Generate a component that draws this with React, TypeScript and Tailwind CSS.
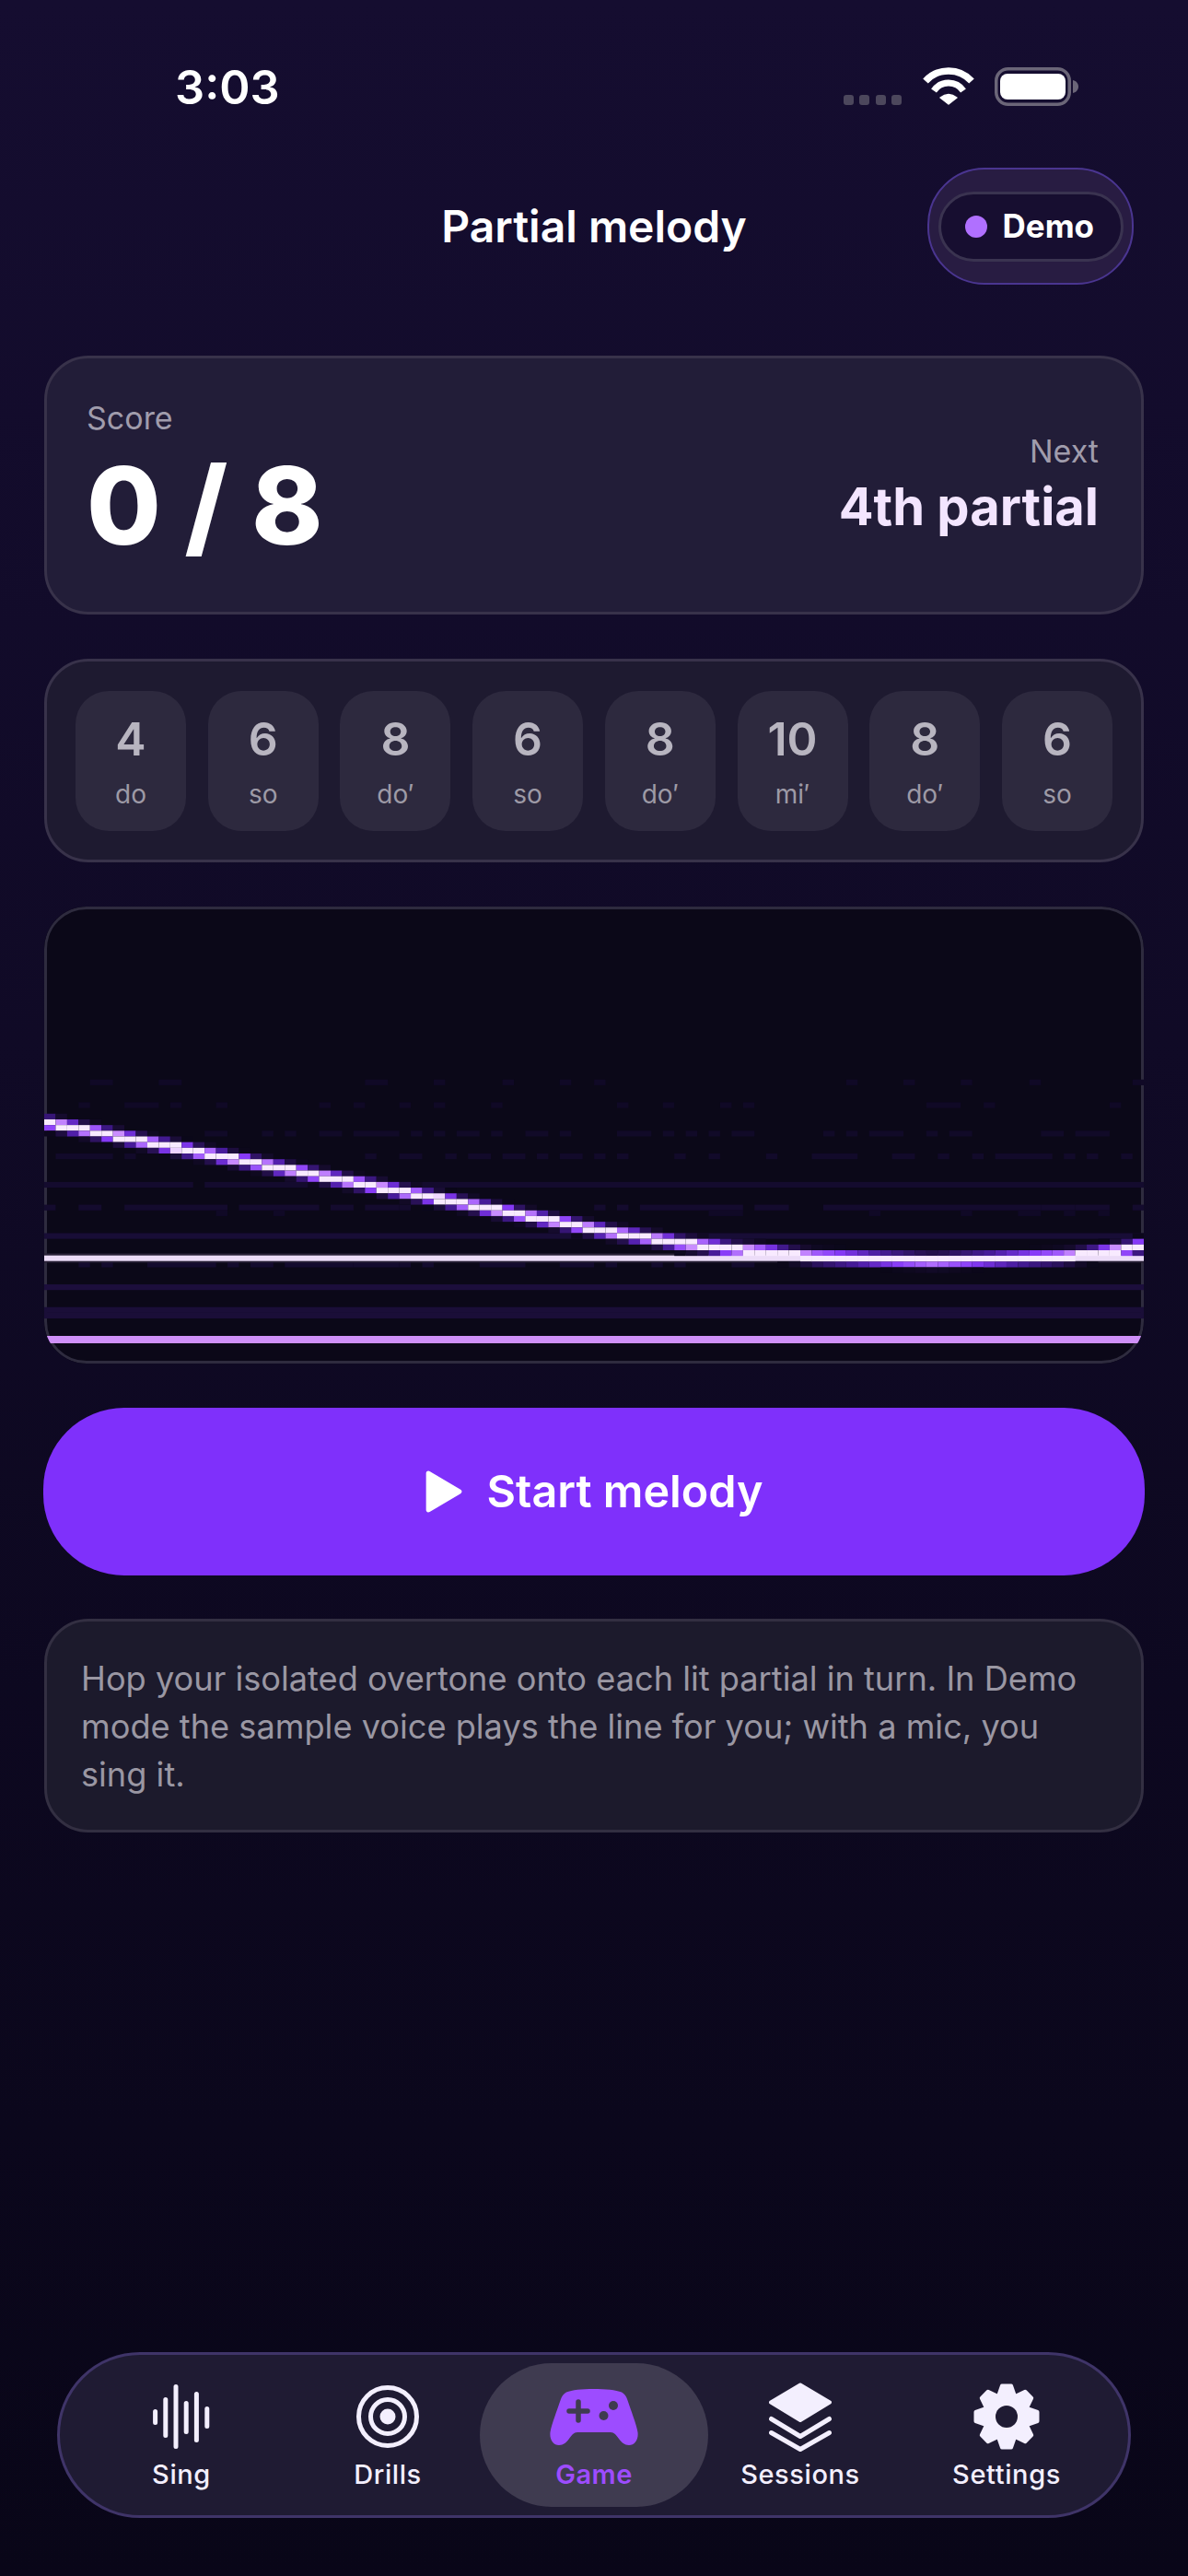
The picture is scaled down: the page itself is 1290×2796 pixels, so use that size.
import React from 'react';

const partials = [
  { n: '4', s: 'do' },
  { n: '6', s: 'so' },
  { n: '8', s: 'do′' },
  { n: '6', s: 'so' },
  { n: '8', s: 'do′' },
  { n: '10', s: 'mi′' },
  { n: '8', s: 'do′' },
  { n: '6', s: 'so' },
];

// spectrogram grid, in page pixels
const COL = 12.44;
const ROW = 6.175;
const X0 = 48;
const Y0 = 986.5;

// faint noise on the harmonic rows: row index -> column ranges
const noise: [number, string, string][] = [
  [30, '#100926', '4-5 10-11 28-29 34 40 45 48 70 75 80 86 95'],
  [34, '#100926', '3 7-9 11 15 24 27 31 34 39 50 54 59 61 77-79 82 93'],
  [39, '#110a28', '1-4 14-15 19 21 24-25 27-30 32 34 36-37 39 42-43 45 50-52 54 56 58 60-61 68 70 72-74 77 79-80 87-88 90-92'],
  [43, '#120a2a', '1-5 7 10-11 13 28 31-32 35 37-38 40-41 43 45-46 48 50 55 58 63 67-70 74-75 78 81 83-87 89 91 94'],
  [48, '#140b2e', '0-12 14-95'],
  [52, '#140b2e', '0 3-4 7-15 17-23 25-26 28-30 31 33 48 50 52-60 62-64 68-86 87-89 90-92 95'],
  [53, '#100926', '15 20 58-60 72 80 85-86 89 92'],
  [57, '#180d36', '0-95'],
  [62, '#140b2e', '3 5 9-14 16 18-19 21-26 27-30 31 33 38-41 45-47 49 53 55 60-61'],
  [66, '#1c0e3c', '0-95'],
  [70, '#1a0e38', '0-95'],
  [71, '#1a0e38', '0-95'],
];

const track: [number, number][] = [
  [48, 1218],
  [660, 1337],
  [737, 1349],
  [789, 1355],
  [843, 1360],
  [883, 1364.5],
  [1013, 1368.4],
  [1154, 1364.5],
  [1195, 1360],
  [1230, 1354],
  [1242, 1352],
];

const trackY = (x: number) => {
  for (let i = 1; i < track.length; i++) {
    const [x0, y0] = track[i - 1];
    const [x1, y1] = track[i];
    if (x <= x1) return y0 + ((y1 - y0) * (x - x0)) / (x1 - x0);
  }
  return track[track.length - 1][1];
};

// brightness falloff away from the tracked partial (distance in rows)
const ramp: [number, number[]][] = [
  [0.5, [248, 234, 255]],
  [0.52, [205, 145, 255]],
  [0.85, [135, 58, 248]],
  [1.05, [74, 28, 160]],
  [1.3, [38, 16, 80]],
  [1.6, [20, 11, 42]],
  [1.9, [10, 7, 24]],
];

const heat = (d: number) => {
  if (d <= ramp[0][0]) return 'rgb(248,234,255)';
  for (let i = 1; i < ramp.length; i++) {
    if (d <= ramp[i][0]) {
      const t = (d - ramp[i - 1][0]) / (ramp[i][0] - ramp[i - 1][0]);
      const c = ramp[i][1].map((v, k) => Math.round(ramp[i - 1][1][k] + (v - ramp[i - 1][1][k]) * t));
      return `rgb(${c.join(',')})`;
    }
  }
  return null;
};

const Spectrogram = () => {
  const cells: React.ReactNode[] = [];
  noise.forEach(([r, fill, spec]) => {
    spec.split(' ').forEach((part) => {
      const [a, b] = part.split('-').map(Number);
      const end = b ?? a;
      cells.push(<rect key={`n${r}-${a}`} x={X0 + a * COL} y={Y0 + r * ROW} width={(end - a + 1) * COL} height={ROW} fill={fill} />);
    });
  });
  cells.push(<rect key="halo" x={X0} y={1360.5} width={1194} height={10} fill="#2a2338" />);
  cells.push(<rect key="line" x={X0} y={1362.7} width={1194} height={6} fill="#ecdcf8" />);
  cells.push(<rect key="low" x={X0} y={1450} width={1194} height={8} fill="#cf90f8" />);
  for (let c = 0; c < 96; c++) {
    const cy = trackY(X0 + (c + 0.5) * COL);
    const mid = Math.round((cy - Y0) / ROW);
    for (let r = mid - 4; r <= mid + 4; r++) {
      const d = Math.abs(Y0 + (r + 0.5) * ROW - cy) / ROW;
      const fill = heat(d);
      // the steady partial line stays lit under the fading edge of the track
      if (r === 61 && d > 0.5) continue;
      if (fill) cells.push(<rect key={`c${c}-${r}`} x={X0 + c * COL} y={Y0 + r * ROW} width={COL} height={ROW} fill={fill} />);
    }
  }
  return (
    <svg viewBox="48 984 1194 496" className="relative block w-[1194px] h-[496px]">
      {cells}
    </svg>
  );
};

const Wifi = () => (
  <svg width="56" height="41" viewBox="0 0 56 41" fill="none" stroke="#fff">
    <path d="M3 15A33.9 33.9 0 0 1 53 15" strokeWidth="7.5" />
    <path d="M12 25.5A19.3 19.3 0 0 1 44 25.5" strokeWidth="7" />
    <path d="M19 33Q28 26 37 33L28 40Z" fill="#fff" strokeWidth="1.5" strokeLinejoin="round" />
  </svg>
);

const Battery = () => (
  <svg width="91" height="42" viewBox="0 0 91 42" fill="none">
    <rect x="1.75" y="1.75" width="79.5" height="38.5" rx="13" stroke="#6b6678" strokeWidth="3.5" />
    <rect x="6" y="7" width="71" height="28" rx="8" fill="#fff" />
    <path d="M85 14C89 15 91 18 91 21S89 27 85 28Z" fill="#6b6678" />
  </svg>
);

const SingIcon = () => (
  <svg width="62" height="70" viewBox="0 0 62 70" stroke="#f3effe" strokeWidth="5" strokeLinecap="round">
    <path d="M2.6 29.5V41.5M13.8 16.5V55.5M25 2.5V67.5M36.2 20.5V51.5M47.4 10.5V60.5M58.8 26.5V45.5" />
  </svg>
);

const DrillsIcon = () => (
  <svg width="70" height="70" viewBox="0 0 70 70" fill="none" stroke="#f3effe" strokeWidth="5">
    <circle cx="35" cy="35" r="31.5" />
    <circle cx="35" cy="35" r="18.5" />
    <circle cx="35" cy="35" r="8.5" fill="#f3effe" stroke="none" />
  </svg>
);

const GameIcon = () => (
  <svg width="96" height="61" viewBox="0 0 96 61">
    <path
      d="M47.5 0C60 0 72 1 78 3.5C81 5 83 8 84 11C88 23 94 38 95.5 47C96.5 55 92 61 86 61C81 61 78 58 75 54C72 50 70 47 66 47L30 47C26 47 24 50 21 54C18 58 15 61 10 61C4 61-.5 55 .5 47C2 38 8 23 12 11C13 8 15 5 18 3.5C24 1 35 0 47.5 0Z"
      fill="#9d4cff"
    />
    <path d="M31 14V34M21 24H41" stroke="#3f3b50" strokeWidth="5.5" strokeLinecap="round" />
    <circle cx="69" cy="18" r="5" fill="#3f3b50" />
    <circle cx="58.5" cy="29" r="5" fill="#3f3b50" />
  </svg>
);

const SessionsIcon = () => (
  <svg width="68" height="75" viewBox="0 0 68 75" fill="none" stroke="#f3effe" strokeLinecap="round" strokeLinejoin="round">
    <path d="M34 2.5L66 21.5L34 41L2 21.5Z" fill="#f3effe" strokeWidth="4" />
    <path d="M2.5 39.5L34 58.5L65.5 39.5" strokeWidth="5" />
    <path d="M2.5 54.5L34 72.5L65.5 54.5" strokeWidth="5" />
  </svg>
);

const SettingsIcon = () => (
  <svg width="72" height="72" viewBox="-36 -36 72 72" fill="#f3effe" stroke="#f3effe" strokeLinejoin="round">
    {[0, 45, 90, 135, 180, 225, 270, 315].map((a) => (
      <polygon key={a} points="-9,-22 -5,-33.5 5,-33.5 9,-22" transform={`rotate(${a})`} strokeWidth="4" />
    ))}
    <circle r="26" stroke="none" />
    <circle r="12" fill="#1f1b33" stroke="none" />
  </svg>
);

const navItems = [
  { label: 'Sing', icon: <SingIcon /> },
  { label: 'Drills', icon: <DrillsIcon /> },
  { label: 'Game', icon: <GameIcon />, active: true },
  { label: 'Sessions', icon: <SessionsIcon /> },
  { label: 'Settings', icon: <SettingsIcon /> },
];

export default function App() {
  return (
    <div className="w-[1290px] h-[2796px] flex flex-col overflow-hidden bg-gradient-to-b from-[#150d30] to-[#090618] font-['Inter',sans-serif] text-white">
      {/* status bar */}
      <div className="flex items-end justify-between h-[115px] pl-[190px] pr-[119px]">
        <span className="text-[50.5px] leading-[50px] font-semibold relative top-[5px]">3:03</span>
        <div className="flex items-end">
          <div className="flex gap-[6.5px] mb-px">
            <span className="w-[11px] h-[11px] rounded-[3px] bg-[#4c475c]" />
            <span className="w-[11px] h-[11px] rounded-[3px] bg-[#4c475c]" />
            <span className="w-[11px] h-[11px] rounded-[3px] bg-[#4c475c]" />
            <span className="w-[11px] h-[11px] rounded-[3px] bg-[#4c475c]" />
          </div>
          <div className="ml-[23px] mb-px">
            <Wifi />
          </div>
          <div className="ml-[22px]">
            <Battery />
          </div>
        </div>
      </div>

      {/* header */}
      <div className="grid grid-cols-[1fr_auto_1fr] items-center mt-[67px] px-[59px]">
        <div />
        <h1 className="text-[48px] leading-[60px] font-semibold">Partial melody</h1>
        <div className="justify-self-end w-[224px] h-[127px] rounded-[62px] border-2 border-[#4a3590] bg-[#281c42] flex items-center justify-center">
          <div className="w-[201px] h-[76px] rounded-[38px] border-[3px] border-[#3a3350] bg-[#170e30] flex items-center pl-[26px] gap-[17px]">
            <span className="w-[24px] h-[24px] rounded-full bg-[#b070ff]" />
            <span className="text-[35px] leading-none font-bold">Demo</span>
          </div>
        </div>
      </div>

      {/* content */}
      <div className="flex flex-col gap-[48px] mt-[77px] px-[48px]">
        <div className="h-[281px] rounded-[48px] border-[3px] border-[#38324a] bg-[#221d38] flex justify-between pl-[43px] pr-[46px]">
          <div>
            <div className="mt-[45px] text-[34px] leading-[40px] text-[#a09cac]">Score</div>
            <div className="mt-[10px] text-[117px] leading-[130px] font-extrabold">0 / 8</div>
          </div>
          <div className="text-right">
            <div className="mt-[81px] text-[34px] leading-[40px] text-[#a09cac]">Next</div>
            <div className="mt-[6px] text-[56px] leading-[68px] font-bold text-[#f3e5ff]">4th partial</div>
          </div>
        </div>

        <div className="h-[221px] rounded-[48px] border-[3px] border-[#38324a] bg-[#1e1a30] flex items-center justify-between px-[31px]">
          {partials.map((p, i) => (
            <div key={i} className="w-[120px] h-[152px] rounded-[36px] bg-[#2d293e] flex flex-col items-center">
              <span className="mt-[22px] text-[50px] leading-[60px] font-semibold text-[#b8b5c0]">{p.n}</span>
              <span className="mt-[13px] text-[28px] leading-[34px] text-[#9d9aa6]">{p.s}</span>
            </div>
          ))}
        </div>

        <div className="relative h-[496px] rounded-[46px] overflow-hidden bg-[#0b0818]">
          <div className="absolute inset-0 rounded-[46px] border-[3px] border-[#2e2b3e]" />
          <Spectrogram />
        </div>

        <button className="h-[182px] -mx-[1px] rounded-[88px] bg-[#7f30fb] flex items-center justify-center gap-[27px]">
          <svg width="40" height="46" viewBox="0 0 38 44">
            <path d="M3 3L35 22L3 41Z" fill="#fff" stroke="#fff" strokeWidth="5" strokeLinejoin="round" />
          </svg>
          <span className="text-[48.5px] leading-[60px] font-semibold">Start melody</span>
        </button>

        <div className="-mt-px h-[232px] rounded-[48px] border-[3px] border-[#332f42] bg-[#1c1a2c] pl-[37px] pr-[37px] pt-[36px] text-[36.2px] leading-[52px] text-[#9a97a3]">
          Hop your isolated overtone onto each lit partial in turn. In Demo mode the sample voice plays the line for you; with a mic, you sing it.
        </div>
      </div>

      {/* tab bar */}
      <div className="mt-auto mb-[63px] mx-[62px] h-[180px] rounded-[90px] border-[3px] border-[#3f3468] bg-[#1f1b33] grid grid-cols-5 items-stretch px-[20px] py-[9px]">
        {navItems.map((item) => (
          <div
            key={item.label}
            className={
              item.active
                ? 'relative -mx-[12px] rounded-[79px] bg-[#3f3b50] flex flex-col items-center'
                : 'relative flex flex-col items-center'
            }
          >
            <div className="h-[98px] flex items-center justify-center pt-[18px]">{item.icon}</div>
            <span
              className={
                item.active
                  ? 'mt-[5px] text-[29px] leading-[36px] font-semibold tracking-[0.5px] text-[#9d4cff]'
                  : 'mt-[5px] text-[29px] leading-[36px] font-medium tracking-[0.6px] text-[#f3effe]'
              }
            >
              {item.label}
            </span>
          </div>
        ))}
      </div>
    </div>
  );
}
